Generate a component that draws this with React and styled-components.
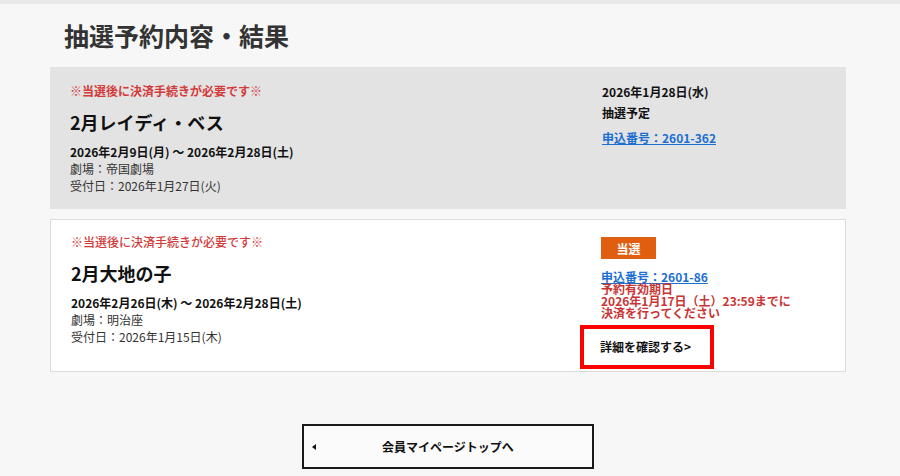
import React from "react";
import styled, { createGlobalStyle } from "styled-components";

const GlobalStyle = createGlobalStyle`
  html, body { margin: 0; padding: 0; background: #f7f7f7; }
  body { font-family: "Noto Sans CJK JP", "Noto Sans", sans-serif; color: #222; }
  * { box-sizing: border-box; }
`;

const TopBar = styled.div`
  height: 4px;
  background: #e9e9e9;
`;

const Main = styled.main`
  padding: 0 54px 0 50px;
`;

const Title = styled.h1`
  margin: 14px 0 15px;
  padding-left: 14px;
  font-size: 25px;
  line-height: 34px;
  font-weight: 700;
  color: #333;
`;

const Card = styled.section`
  display: grid;
  grid-template-columns: 1fr 244px;
  background: ${(p) => (p.$muted ? "#e3e3e3" : "#fff")};
  border: ${(p) => (p.$muted ? "none" : "1px solid #dcdcdc")};
  margin-bottom: 10px;
`;

const LeftCol = styled.div`
  padding: ${(p) => p.$pad};
  padding-left: 20px;
`;

const RightCol = styled.div`
  padding-top: ${(p) => p.$top}px;
  padding-bottom: ${(p) => p.$bottom}px;
  display: flex;
  flex-direction: column;
  align-items: flex-start;
`;

const Note = styled.p`
  margin: 0;
  font-size: 12px;
  line-height: 16px;
  font-weight: ${(p) => (p.$light ? 500 : 700)};
  color: #d33a3a;
`;

const ShowTitle = styled.h2`
  margin: 10px 0 8px;
  font-size: 18px;
  line-height: 26px;
  font-weight: 700;
  color: #111;
`;

const Line = styled.p`
  margin: 0;
  font-size: 12px;
  line-height: 17px;
  font-weight: ${(p) => (p.$bold ? 700 : 400)};
  color: ${(p) => (p.$bold ? "#111" : "#333")};
`;

const Info = styled.p`
  margin: 0 0 ${(p) => p.$mb || 0}px;
  font-size: 12px;
  line-height: 16px;
  font-weight: 700;
  color: #111;
`;

const AppLink = styled.a`
  font-size: 12px;
  line-height: ${(p) => p.$lh || 16}px;
  font-weight: 700;
  color: #1b6fd1;
  text-decoration: underline;
`;

const Badge = styled.span`
  display: inline-flex;
  align-items: center;
  justify-content: center;
  width: 55px;
  height: 22px;
  margin-bottom: 11px;
  background: #e05e10;
  color: #fff;
  font-size: 12px;
  font-weight: 700;
`;

const Warn = styled.div`
  font-size: 12px;
  line-height: 12px;
  font-weight: 700;
  color: #c93535;
  margin-bottom: 6px;
  p { margin: 0; }
`;

const DetailLink = styled.a`
  display: inline-block;
  margin-left: -21px;
  padding: 10px 19px 10px 16px;
  border: 4px solid #ff0000;
  font-size: 12px;
  line-height: 16px;
  font-weight: 700;
  color: #111;
  text-decoration: none;
`;

const Footer = styled.div`
  display: flex;
  justify-content: center;
  padding-top: 42px;
`;

const BackButton = styled.a`
  position: relative;
  display: flex;
  align-items: center;
  justify-content: center;
  width: 292px;
  height: 45px;
  border: 2px solid #1a1a1a;
  background: #fbfbfb;
  font-size: 12px;
  font-weight: 700;
  color: #111;
  text-decoration: none;
  &::before {
    content: "";
    position: absolute;
    left: 8px;
    top: 50%;
    margin-top: -3px;
    border-style: solid;
    border-width: 3px 4px 3px 0;
    border-color: transparent #111 transparent transparent;
  }
`;

export default function App() {
  return (
    <>
      <GlobalStyle />
      <TopBar />
      <Main>
        <Title>抽選予約内容・結果</Title>
        <Card $muted>
          <LeftCol $pad="16px 0 15px">
            <Note>※当選後に決済手続きが必要です※</Note>
            <ShowTitle>2月レイディ・ベス</ShowTitle>
            <Line $bold>2026年2月9日(月) ～ 2026年2月28日(土)</Line>
            <Line>劇場：帝国劇場</Line>
            <Line>受付日：2026年1月27日(火)</Line>
          </LeftCol>
          <RightCol $top={17} $bottom={0}>
            <Info $mb={5}>2026年1月28日(水)</Info>
            <Info $mb={9}>抽選予定</Info>
            <AppLink href="#">申込番号：2601-362</AppLink>
          </RightCol>
        </Card>
        <Card>
          <LeftCol $pad="14px 0 0">
            <Note $light>※当選後に決済手続きが必要です※</Note>
            <ShowTitle>2月大地の子</ShowTitle>
            <Line $bold>2026年2月26日(木) ～ 2026年2月28日(土)</Line>
            <Line>劇場：明治座</Line>
            <Line>受付日：2026年1月15日(木)</Line>
          </LeftCol>
          <RightCol $top={17} $bottom={2}>
            <Badge>当選</Badge>
            <AppLink href="#" $lh={13}>申込番号：2601-86</AppLink>
            <Warn>
              <p>予約有効期日</p>
              <p>2026年1月17日（土）23:59までに</p>
              <p>決済を行ってください</p>
            </Warn>
            <DetailLink href="#">詳細を確認する&gt;</DetailLink>
          </RightCol>
        </Card>
        <Footer>
          <BackButton href="#">会員マイページトップへ</BackButton>
        </Footer>
      </Main>
    </>
  );
}
